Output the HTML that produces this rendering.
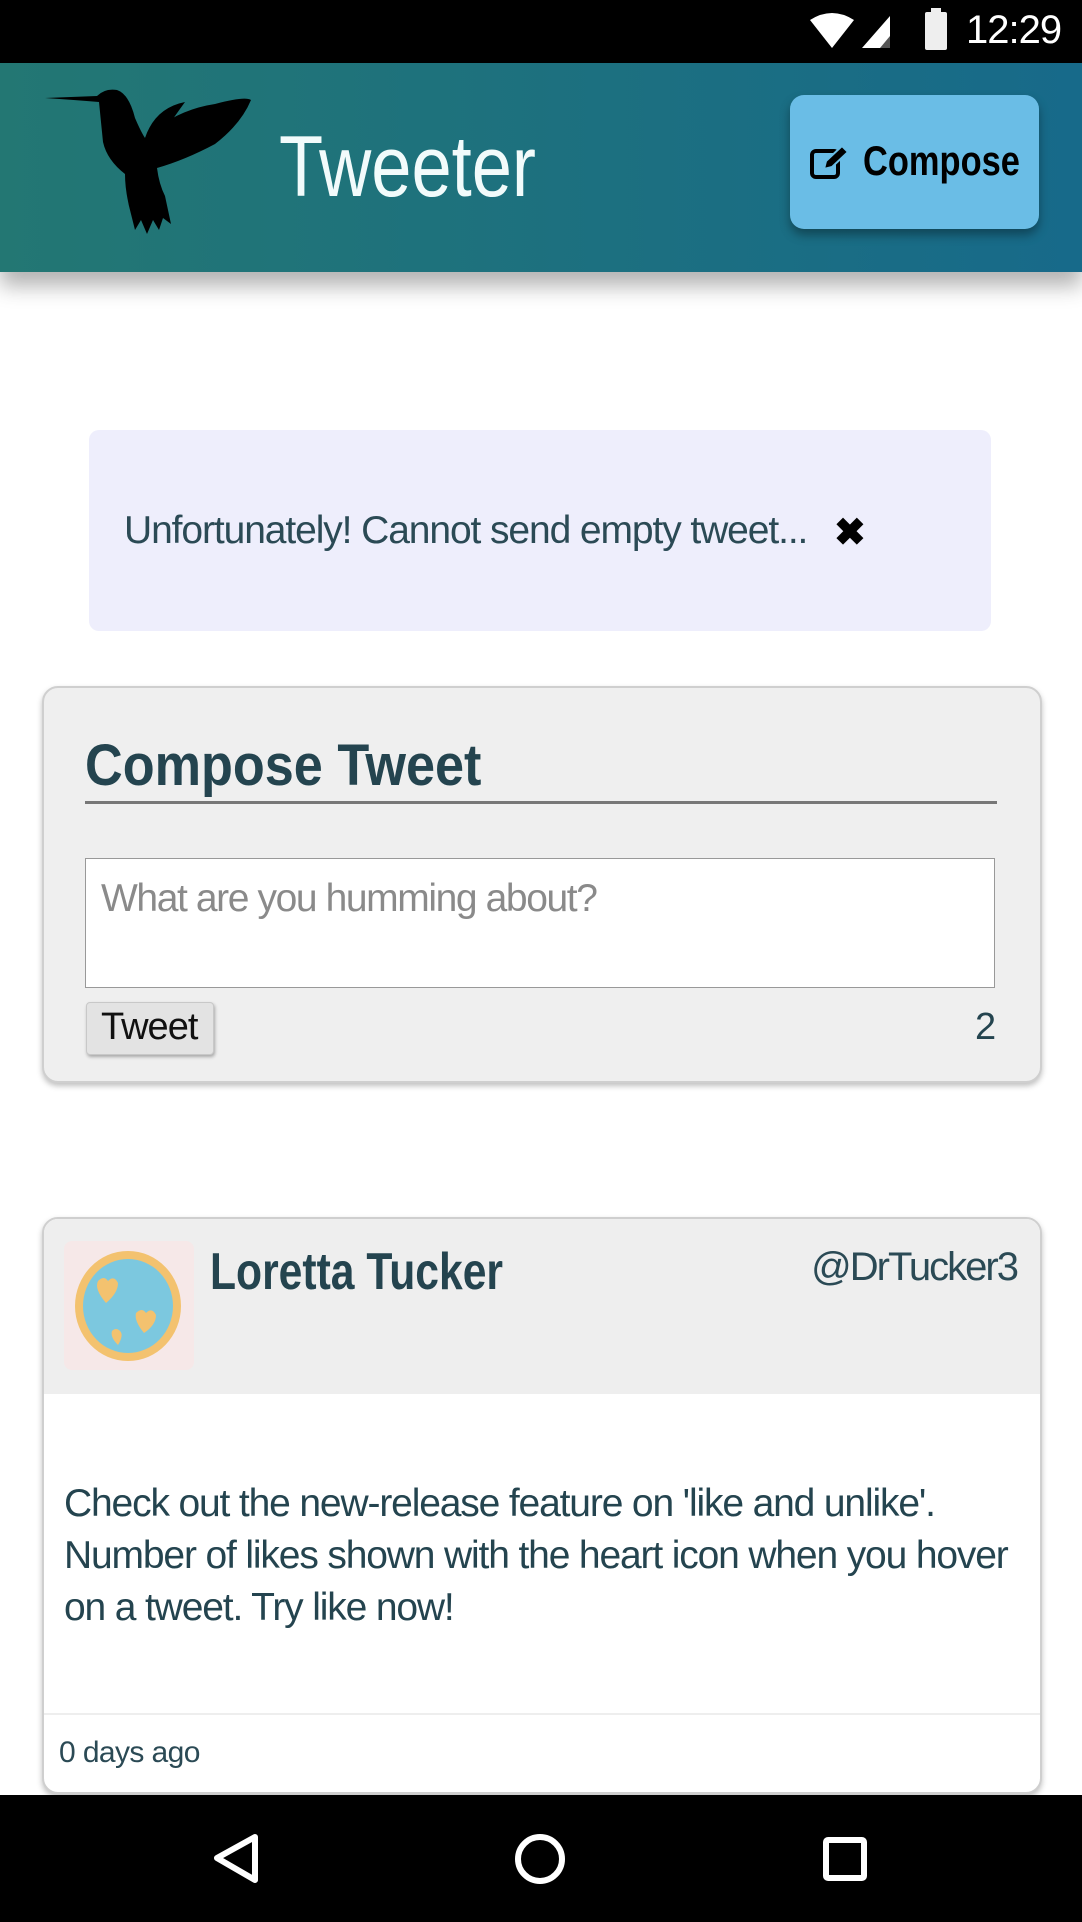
<!DOCTYPE html>
<html><head><meta charset="utf-8"><style>
*{margin:0;padding:0;box-sizing:border-box}
body{width:1082px;height:1922px;background:#fff;position:relative;overflow:hidden;font-family:"Liberation Sans",sans-serif;color:#24444f}
.abs{position:absolute;white-space:nowrap}
#status{left:0;top:0;width:1082px;height:63px;background:#000}
#hdr{left:0;top:63px;width:1082px;height:209px;background:linear-gradient(90deg,#237773,#176a8a);box-shadow:0 14px 20px rgba(0,0,0,.3)}
#compose{left:790px;top:95px;width:249px;height:134px;background:#6abde6;border-radius:14px;box-shadow:0 6px 10px rgba(0,0,0,.35)}
#alert{left:89px;top:430px;width:902px;height:201px;background:#eeeefc;border-radius:10px}
#card1{left:42px;top:686px;width:1000px;height:397px;background:#efefef;border:2px solid #cfcfcf;border-radius:16px;box-shadow:0 3px 6px rgba(0,0,0,.25)}
#card2{left:42px;top:1217px;width:1000px;height:577px;background:#fff;border:2px solid #cfcfcf;border-radius:16px;box-shadow:0 3px 6px rgba(0,0,0,.25);overflow:hidden}
#nav{left:0;top:1795px;width:1082px;height:127px;background:#000}
</style></head><body>
<div class="abs" id="status"></div>
<svg class="abs" style="left:810px;top:12px" width="100" height="40" viewBox="0 0 100 40">
<path d="M0 8 Q22 -6 44 8 L22 36 Z" fill="#fff"/>
<path d="M52 36 L80 4 L80 36 Z" fill="#fff"/><path d="M70 36 L80 24 L80 36Z" fill="#555"/>
</svg>
<div class="abs" style="left:925px;top:12px;width:22px;height:38px;background:#eee;border-radius:2px"></div>
<div class="abs" style="left:931px;top:8px;width:10px;height:5px;background:#eee"></div>
<div class="abs" style="left:966px;top:8px;color:#fff;font-size:40px;letter-spacing:-1px">12:29</div>
<div class="abs" id="hdr"></div>
<svg class="abs" style="left:45px;top:88px" width="210" height="148" viewBox="0 0 210 148">
<path d="M0 10 L52 8 Q60 0 72 2 Q84 6 90 30 Q96 44 100 50 Q130 22 170 16 Q200 8 206 12 Q196 36 170 56 Q140 72 112 80 Q114 96 120 108 L126 136 L118 130 L114 142 L108 132 L102 146 L96 132 L90 142 L86 126 Q80 104 80 86 Q62 72 58 54 Q56 34 54 14 Q30 12 0 10 Z" fill="#000"/>
<path d="M100 50 Q110 20 140 14 Q124 36 114 52 Z" fill="#000"/>
</svg>
<div class="abs" style="left:279px;top:118px;font-size:86px;color:#f2fbfb;transform:scaleX(.84);transform-origin:left top">Tweeter</div>
<div class="abs" id="compose"></div>
<svg class="abs" style="left:810px;top:145px" width="42" height="36" viewBox="0 0 42 36">
<rect x="2" y="6" width="26" height="26" rx="4" fill="none" stroke="#000" stroke-width="4"/>
<path d="M14 24 L16 16 L32 1 L38 7 L22 22 Z" fill="#000" stroke="#6abde6" stroke-width="2"/>
</svg>
<div class="abs" style="left:863px;top:137px;font-size:42px;font-weight:bold;color:#000;transform:scaleX(.82);transform-origin:left top">Compose</div>
<div class="abs" id="alert"></div>
<div class="abs" style="left:124px;top:509px;font-size:39px;color:#2b4a55;letter-spacing:-1.1px">Unfortunately! Cannot send empty tweet...</div>
<div class="abs" style="left:834px;top:510px;font-size:38px;color:#000;font-weight:bold">✖</div>
<div class="abs" id="card1"></div>
<div class="abs" style="left:85px;top:732px;font-size:58px;font-weight:bold;color:#24444f;transform:scaleX(.9);transform-origin:left top">Compose Tweet</div>
<div class="abs" style="left:85px;top:801px;width:912px;height:3px;background:#777"></div>
<div class="abs" style="left:85px;top:858px;width:910px;height:130px;background:#fff;border:1px solid #999"></div>
<div class="abs" style="left:101px;top:877px;font-size:39px;color:#8a8a8a;letter-spacing:-1.4px">What are you humming about?</div>
<div class="abs" style="left:86px;top:1002px;width:128px;height:53px;background:#e3e3e3;border:1px solid #c8c8c8;border-radius:4px;box-shadow:1px 2px 3px rgba(0,0,0,.3)"></div>
<div class="abs" style="left:101px;top:1006px;font-size:38px;color:#111;letter-spacing:-1px">Tweet</div>
<div class="abs" style="left:975px;top:1006px;font-size:38px;color:#24444f">2</div>
<div class="abs" id="card2"><div style="position:absolute;left:0;top:0;width:1000px;height:175px;background:#eee"></div>
<div style="position:absolute;left:0;top:494px;width:1000px;height:2px;background:#eee"></div></div>
<div class="abs" style="left:64px;top:1241px;width:130px;height:129px;background:#f6e8e8;border-radius:8px"></div>
<svg class="abs" style="left:64px;top:1241px" width="130" height="129" viewBox="0 0 130 129">
<ellipse cx="64" cy="65" rx="53" ry="55" fill="#f3c26f"/><ellipse cx="64" cy="65" rx="45" ry="47" fill="#7cc8df"/>
<path d="M42 62 Q30 48 34 40 Q40 34 44 40 Q50 34 54 42 Q54 52 42 62Z" fill="#f3c26f"/>
<path d="M80 92 Q70 80 72 72 Q78 66 82 72 Q88 66 92 74 Q92 84 80 92Z" fill="#f3c26f"/>
<path d="M54 104 Q46 96 48 90 Q52 86 56 90 Q60 94 54 104Z" fill="#f3c26f"/>
</svg>
<div class="abs" style="left:210px;top:1242px;font-size:52px;font-weight:bold;color:#24444f;transform:scaleX(.82);transform-origin:left top">Loretta Tucker</div>
<div class="abs" style="right:65px;top:1245px;font-size:40px;color:#2b4a55;letter-spacing:-2px">@DrTucker3</div>
<div class="abs" style="left:64px;top:1478px;font-size:39px;line-height:52px;color:#24444f;letter-spacing:-1.15px">Check out the new-release feature on 'like and unlike'.<br>Number of likes shown with the heart icon when you hover<br>on a tweet. Try like now!</div>
<div class="abs" style="left:59px;top:1736px;font-size:30px;color:#2b4a55;letter-spacing:-0.6px">0 days ago</div>
<div class="abs" id="nav"></div>
<svg class="abs" style="left:0;top:1795px" width="1082" height="127" viewBox="0 0 1082 127">
<path d="M255 42 L217 63 L255 85 Z" fill="none" stroke="#fff" stroke-width="6" stroke-linejoin="round"/>
<circle cx="540" cy="64" r="22" fill="none" stroke="#fff" stroke-width="6"/>
<rect x="826" y="45" width="38" height="38" rx="2" fill="none" stroke="#fff" stroke-width="6"/>
</svg>
</body></html>
